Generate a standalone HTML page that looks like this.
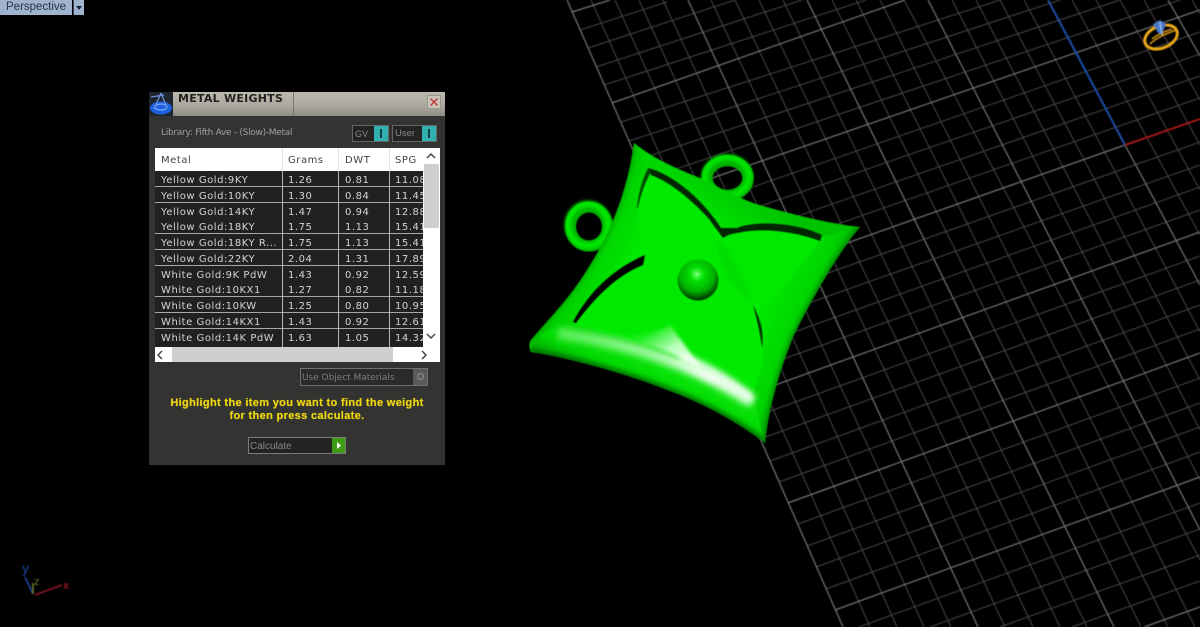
<!DOCTYPE html>
<html><head><meta charset="utf-8"><title>Metal Weights</title>
<style>
html,body{margin:0;padding:0;background:#000;width:1200px;height:627px;overflow:hidden;}
#page{position:relative;width:1200px;height:627px;overflow:hidden;background:#000;font-family:"Liberation Sans",sans-serif;}
svg.full{position:absolute;left:0;top:0;}
.a{position:absolute;white-space:nowrap;}
#panel{position:absolute;left:0;top:0;width:1200px;height:627px;filter:blur(.35px);}
.row{position:absolute;left:155px;width:268px;height:15px;background:#222120;border-bottom:1px solid #a8a8a4;overflow:hidden;font:10px/19px "DejaVu Sans",sans-serif;letter-spacing:.55px;color:#d4d4d4;}
.row span{position:absolute;top:0;white-space:nowrap;}
.c1{left:6px}.c2{left:133px}.c3{left:190px}.c4{left:240px}
.sep{position:absolute;width:1px;background:#b4b4b0;top:171px;height:176px;}
.hs{position:absolute;width:1px;background:#e2e2e2;top:148px;height:23px;}
.hd{position:absolute;top:154px;font:10px/14px "DejaVu Sans",sans-serif;letter-spacing:.55px;color:#444;}
</style></head><body>
<div id="page">
<svg class="full" width="1200" height="627" viewBox="0 0 1200 627" style="filter:blur(.4px)">
<g stroke="#484848" stroke-width="1" fill="none">
<path d="M591 0L870 627M615 0L897 627M639 0L924 627M663 0L951 627M711 0L1005 627M735 0L1033 627M759 0L1060 627M783 0L1087 627M832 0L1141 627M856 0L1168 627M880 0L1195 627M904 0L1200 560M952 0L1200 480M976 0L1200 430M1000 0L1200 380M1024 0L1200 332M1072 0L1200 235M1096 0L1200 190M1120 0L1200 145M1144 0L1200 100M1192 0L1200 14"/>
<path d="M580 30L667 2M588 48L735 0M596 67L802 0M604 85L866 0M621 122L1000 0M629 141L1060 0M637 160L1120 0M646 179L1180 0M663 218L1200 32M671 237L1200 54M680 257L1200 76M688 276L1200 98M706 316L1200 142M715 336L1200 165M724 357L1200 187M733 377L1200 210M751 418L1200 256M760 439L1200 280M770 461L1200 305M779 482L1200 329M798 524L1200 378M807 546L1200 403M816 567L1200 427M826 589L1200 452M859 627L1200 503M930 627L1200 529M1000 627L1200 555M1072 627L1200 581"/>
</g>
<g stroke="#767676" stroke-width="1.2" fill="none">
<path d="M567 0L843 627M688 0L978 627M807 0L1114 627M928 0L1200 530M1168 0L1200 56M1125 145L1200 285"/>
<path d="M572 12L610 0M612 103L905 0M654 198L1200 10M697 296L1125 145M742 397L1200 232M788 503L1200 353M835 610L1200 477M1144 627L1200 607"/>
</g>
<path d="M1048 0L1125 145" stroke="#1c4fa8" stroke-width="2" fill="none"/>
<path d="M1125 145L1200 119" stroke="#a01818" stroke-width="2" fill="none"/>
<!-- ring icon -->
<g fill="none">
<ellipse cx="1161" cy="37" rx="17" ry="11" transform="rotate(-22 1161 37)" stroke="#eaa818" stroke-width="3"/>
<path d="M1150 44C1157 37 1168 33 1176 30M1152 39C1158 34 1166 31 1172 29" stroke="#d89810" stroke-width="1.6"/>
<path d="M1153 24L1160 20L1166 24L1162 34L1158 33Z" fill="#4a78c8"/>
<path d="M1160 22L1162 35" stroke="#9ab8e8" stroke-width="1.5"/>
</g>
<!-- axes -->
<g fill="none" stroke-width="1.8">
<path d="M33 594L25 577" stroke="#1b3f8c"/><path d="M35 595L62 585" stroke="#7c1424"/><path d="M33 594L33 583" stroke="#6c7028"/>
</g>
<text x="22" y="573" font-family="Liberation Sans" font-size="14" fill="#1f48a0">y</text>
<text x="34" y="585" font-family="Liberation Sans" font-size="11" fill="#6c7628">z</text>
<text x="63" y="589" font-family="Liberation Sans" font-size="11" font-weight="bold" fill="#8c1424">x</text>
</svg>

<!-- pendant -->
<svg class="full" width="1200" height="627" viewBox="0 0 1200 627" style="filter:blur(.5px)">
<defs>
<clipPath id="oc"><path d="M634 143C655 160 680 170 700 178C720 188 735 196 753 203C790 214 830 224 860 227C840 250 812 298 793 337C780 370 769 405 765 443C735 420 700 402 670 391C625 373 570 358 531 352C529 347 529 343 531 340C548 320 570 298 587 270C610 235 628 190 634 143Z"/></clipPath>
<linearGradient id="bb" gradientUnits="userSpaceOnUse" x1="668" y1="350" x2="645" y2="400"><stop offset="0" stop-color="#10f010"/><stop offset=".7" stop-color="#00d800"/><stop offset="1" stop-color="#00a800"/></linearGradient>
<linearGradient id="rb" gradientUnits="userSpaceOnUse" x1="755" y1="320" x2="812" y2="345"><stop offset="0" stop-color="#00ea00"/><stop offset=".65" stop-color="#00d400"/><stop offset="1" stop-color="#00a800"/></linearGradient>
<linearGradient id="lb" gradientUnits="userSpaceOnUse" x1="625" y1="280" x2="575" y2="255"><stop offset="0" stop-color="#00ea00"/><stop offset="1" stop-color="#00c800"/></linearGradient>
<linearGradient id="tb" gradientUnits="userSpaceOnUse" x1="725" y1="225" x2="748" y2="190"><stop offset="0" stop-color="#00e000"/><stop offset="1" stop-color="#00c400"/></linearGradient>
<linearGradient id="wh" gradientUnits="userSpaceOnUse" x1="570" y1="325" x2="752" y2="398"><stop offset="0" stop-color="#b0ffb0" stop-opacity=".5"/><stop offset=".45" stop-color="#e0ffe0" stop-opacity=".7"/><stop offset=".75" stop-color="#fff"/><stop offset="1" stop-color="#d0ffd0" stop-opacity=".9"/></linearGradient>
<linearGradient id="pt" gradientUnits="userSpaceOnUse" x1="650" y1="322" x2="668" y2="352"><stop offset="0" stop-color="#00ea00"/><stop offset=".3" stop-color="#20ee20"/><stop offset="1" stop-color="#c0ffc0"/></linearGradient>
<radialGradient id="sp" cx=".47" cy=".36" r=".66"><stop offset="0" stop-color="#d8ffd8"/><stop offset=".06" stop-color="#50ff50"/><stop offset=".28" stop-color="#00dc00"/><stop offset=".65" stop-color="#00b000"/><stop offset=".9" stop-color="#004800"/><stop offset="1" stop-color="#002000"/></radialGradient>
<filter id="s0" filterUnits="userSpaceOnUse" x="500" y="120" width="400" height="350"><feGaussianBlur stdDeviation="1.5"/></filter>
<filter id="s1" filterUnits="userSpaceOnUse" x="500" y="120" width="400" height="350"><feGaussianBlur stdDeviation="3.5"/></filter>
<filter id="s2" filterUnits="userSpaceOnUse" x="500" y="120" width="400" height="350"><feGaussianBlur stdDeviation="2.5"/></filter>
</defs>
<ellipse cx="589" cy="226.5" rx="18.5" ry="19.5" fill="none" stroke="#00b400" stroke-width="11"/>
<ellipse cx="588" cy="225" rx="20" ry="21" fill="none" stroke="#00ea00" stroke-width="6" filter="url(#s0)"/>
<ellipse cx="727.5" cy="178" rx="20.5" ry="17.5" fill="none" stroke="#00b000" stroke-width="11.5"/>
<ellipse cx="727" cy="176.5" rx="22" ry="19" fill="none" stroke="#00e800" stroke-width="6" filter="url(#s0)"/>
<path d="M634 143C655 160 680 170 700 178C720 188 735 196 753 203C790 214 830 224 860 227C840 250 812 298 793 337C780 370 769 405 765 443C735 420 700 402 670 391C625 373 570 358 531 352C529 347 529 343 531 340C548 320 570 298 587 270C610 235 628 190 634 143Z" fill="#00dc00"/>
<g clip-path="url(#oc)">
<path d="M634 143C655 160 680 170 700 178C720 188 735 196 753 203C790 214 830 224 860 227L822 237C790 222 745 222 720 233C705 205 680 178 648 168Z" fill="url(#tb)"/>
<path d="M860 227C840 250 812 298 793 337C780 370 769 405 765 443L752 393C762 370 765 350 762 343L753 307L787 283L822 237Z" fill="url(#rb)"/>
<path d="M765 443C735 420 700 402 670 391C625 373 570 358 531 352L531 340L553 328C610 342 690 355 752 393Z" fill="url(#bb)"/>
<path d="M531 340C548 320 570 298 587 270C610 235 628 190 634 143L648 168C640 185 637 200 638 210L643 258C615 268 590 290 573 323L553 328Z" fill="url(#lb)"/>
<!-- face -->
<path d="M648 168C680 178 708 205 720 233C745 222 790 222 822 237L787 283C775 295 762 302 753 307C760 320 763 332 762 343C765 360 760 378 752 393C700 360 640 345 573 323C590 290 615 268 643 258L638 210C637 195 642 180 648 168Z" fill="#00ea00"/>
<path d="M718 238C716 255 722 268 730 280C738 290 746 298 753 305C745 280 733 255 718 238Z" fill="#00de00" filter="url(#s0)"/>
<!-- outer shading -->
<path d="M531 352C570 358 625 373 670 391C700 402 735 420 765 443" fill="none" stroke="#007400" stroke-width="7" filter="url(#s2)"/>
<path d="M860 227C840 250 812 298 793 337C780 370 769 405 765 443" fill="none" stroke="#008800" stroke-width="5" filter="url(#s2)"/>
<path d="M531 340C548 320 570 298 587 270C610 235 628 190 634 143" fill="none" stroke="#00a800" stroke-width="4" filter="url(#s2)"/>
<!-- highlight -->
<path d="M630 333C645 334 660 331 670 325L703 370C680 355 650 345 630 338Z" fill="url(#pt)" filter="url(#s0)"/>
<path d="M558 333C620 342 690 360 752 402" fill="none" stroke="url(#wh)" stroke-width="12" filter="url(#s1)"/>
<path d="M680 356C708 367 732 382 752 399" fill="none" stroke="#fff" stroke-width="7" filter="url(#s1)"/>
</g>
<!-- slots -->
<path d="M648 168C665 172 690 188 710 213C714 218 718 223 721 228L737 228C750 222 790 220 822 235L820 241C790 230 760 228 737 233C730 234 726 236 723 238C716 228 712 224 710 220C692 200 670 182 651 175Z" fill="#012601"/>
<path d="M573 322C590 290 615 268 645 255L643 265C618 275 597 295 576 323Z" fill="#000"/>
<path d="M637 208C638 195 642 180 648 168L651 172C645 182 640 197 638 208Z" fill="#004800"/>
<path d="M753 305C761 320 764 332 762 348C760 332 757 320 753 305Z" fill="#003000"/>
<circle cx="698" cy="280" r="20.5" fill="url(#sp)"/>
</svg>

<!-- panel -->
<div id="panel">
<div class="a" style="left:149px;top:92px;width:296px;height:373px;background:#333332"></div>
<div class="a" style="left:149px;top:92px;width:296px;height:24px;background:linear-gradient(#bdb9ae,#a9a69b 60%,#8f8d84)"></div>
<div class="a" style="left:149px;top:92px;width:24px;height:24px;background:#1e2430"></div>
<div class="a" style="left:293px;top:92px;width:1px;height:24px;background:#77756e"></div>
<svg class="a" style="left:149px;top:92px" width="26" height="24" viewBox="0 0 26 24"><ellipse cx="12" cy="16" rx="11" ry="6.5" fill="#1f5fe0"/><ellipse cx="12" cy="15" rx="6" ry="3" fill="none" stroke="#7fb4ff" stroke-width="1"/><path d="M12 1L5 17M12 1L18 16M2 5L15 3" stroke="#6b8fd8" stroke-width="1.3" fill="none"/></svg>
<div class="a" style="left:178px;top:92px;font:bold 11px/14px 'DejaVu Sans',sans-serif;letter-spacing:.25px;color:#222">METAL WEIGHTS</div>
<div class="a" style="left:427px;top:95px;width:14px;height:14px;background:#c9c4ba;border:1px solid #9b978d;box-sizing:border-box"></div>
<svg class="a" style="left:427px;top:95px" width="14" height="14"><path d="M3.5 3.5L10.5 10.5M10.5 3.5L3.5 10.5" stroke="#c43030" stroke-width="1.3"/></svg>
<div class="a" style="left:161px;top:127px;font:9px/12px 'DejaVu Sans',sans-serif;letter-spacing:-.28px;color:#a0a0a0">Library: Fifth Ave - (Slow)-Metal</div>

<div class="a" style="left:352px;top:125px;width:35px;height:15px;background:#232322;border:1px solid #666"></div>
<div class="a" style="left:374px;top:126px;width:14px;height:15px;background:#30b0b0"></div>
<div class="a" style="left:380px;top:129px;width:2px;height:9px;background:#153c44"></div>
<div class="a" style="left:355px;top:128px;font:9px/12px 'Liberation Sans',sans-serif;color:#8a8a8a">GV</div>
<div class="a" style="left:392px;top:125px;width:43px;height:15px;background:#232322;border:1px solid #666"></div>
<div class="a" style="left:422px;top:126px;width:14px;height:15px;background:#30b0b0"></div>
<div class="a" style="left:428px;top:129px;width:2px;height:9px;background:#153c44"></div>
<div class="a" style="left:395px;top:128px;font:9.5px/12px 'Liberation Sans',sans-serif;color:#8a8a8a">User</div>

<div class="a" style="left:155px;top:148px;width:285px;height:214px;background:#fff"></div>
<div class="hd" style="left:161px">Metal</div>
<div class="hd" style="left:288px">Grams</div>
<div class="hd" style="left:345px">DWT</div>
<div class="hd" style="left:395px">SPG</div>

<div class="row" style="top:171px"><span class="c1">Yellow Gold:9KY</span><span class="c2">1.26</span><span class="c3">0.81</span><span class="c4">11.08</span></div>
<div class="row" style="top:187px"><span class="c1">Yellow Gold:10KY</span><span class="c2">1.30</span><span class="c3">0.84</span><span class="c4">11.45</span></div>
<div class="row" style="top:203px"><span class="c1">Yellow Gold:14KY</span><span class="c2">1.47</span><span class="c3">0.94</span><span class="c4">12.88</span></div>
<div class="row" style="top:218px"><span class="c1">Yellow Gold:18KY</span><span class="c2">1.75</span><span class="c3">1.13</span><span class="c4">15.41</span></div>
<div class="row" style="top:234px"><span class="c1">Yellow Gold:18KY R...</span><span class="c2">1.75</span><span class="c3">1.13</span><span class="c4">15.41</span></div>
<div class="row" style="top:250px"><span class="c1">Yellow Gold:22KY</span><span class="c2">2.04</span><span class="c3">1.31</span><span class="c4">17.89</span></div>
<div class="row" style="top:266px"><span class="c1">White Gold:9K PdW</span><span class="c2">1.43</span><span class="c3">0.92</span><span class="c4">12.59</span></div>
<div class="row" style="top:281px"><span class="c1">White Gold:10KX1</span><span class="c2">1.27</span><span class="c3">0.82</span><span class="c4">11.18</span></div>
<div class="row" style="top:297px"><span class="c1">White Gold:10KW</span><span class="c2">1.25</span><span class="c3">0.80</span><span class="c4">10.95</span></div>
<div class="row" style="top:313px"><span class="c1">White Gold:14KX1</span><span class="c2">1.43</span><span class="c3">0.92</span><span class="c4">12.61</span></div>
<div class="row" style="top:329px;height:18px;border:0"><span class="c1">White Gold:14K PdW</span><span class="c2">1.63</span><span class="c3">1.05</span><span class="c4">14.32</span></div>
<div class="sep" style="left:282px"></div><div class="sep" style="left:338px"></div><div class="sep" style="left:389px"></div>
<div class="hs" style="left:282px"></div><div class="hs" style="left:338px"></div><div class="hs" style="left:389px"></div>

<div class="a" style="left:424px;top:164px;width:15px;height:64px;background:#cfcfcf"></div>
<div class="a" style="left:172px;top:347px;width:221px;height:15px;background:#cfcfcf"></div>
<svg class="a" style="left:155px;top:148px" width="285" height="214" fill="none" stroke="#444" stroke-width="1.5"><path d="M272 10L276 6L280 10M272 186L276 190L280 186M7 203L3 207L7 211M267 203L271 207L267 211"/></svg>

<div class="a" style="left:300px;top:368px;width:126px;height:16px;background:#2a2a2a;border:1px solid #707070"></div>
<div class="a" style="left:413px;top:369px;width:14px;height:16px;background:#5a5a5a"></div>
<div class="a" style="left:417px;top:373px;width:7px;height:7px;border:1px solid #909090;border-radius:50%;box-sizing:border-box"></div>
<div class="a" style="left:302px;top:372px;font:9px/13px 'DejaVu Sans',sans-serif;letter-spacing:-.03px;color:#7e7e7e">Use Object Materials</div>

<div class="a" style="left:149px;top:397px;width:296px;text-align:center;font:bold 11px/13px 'Liberation Sans',sans-serif;letter-spacing:.34px;color:#ecd512;text-shadow:0 0 .6px #ecd512">Highlight the item you want to find the weight<br>for then press calculate.</div>

<div class="a" style="left:248px;top:437px;width:96px;height:15px;background:#232322;border:1px solid #7c7c7c"></div>
<div class="a" style="left:332px;top:438px;width:13px;height:15px;background:#3f9a14"></div>
<svg class="a" style="left:332px;top:438px" width="13" height="15"><path d="M5 4L9 7.5L5 11Z" fill="#fff"/></svg>
<div class="a" style="left:250px;top:440px;font:10px/13px 'Liberation Sans',sans-serif;color:#888">Calculate</div>

<div class="a" style="left:0;top:0;width:72px;height:15px;background:#9fb3cf"></div>
<div class="a" style="left:6px;top:0;font:11.5px/14px 'Liberation Sans',sans-serif;color:#2a3442">Perspective</div>
<div class="a" style="left:73px;top:0;width:11px;height:15px;background:#9fb3cf;border-left:1px solid #3c4a5c;box-sizing:border-box"></div>
<svg class="a" style="left:73px;top:0" width="11" height="15"><path d="M3 6H9L6 10Z" fill="#1c2430"/></svg>
</div>
</div>
</body></html>
